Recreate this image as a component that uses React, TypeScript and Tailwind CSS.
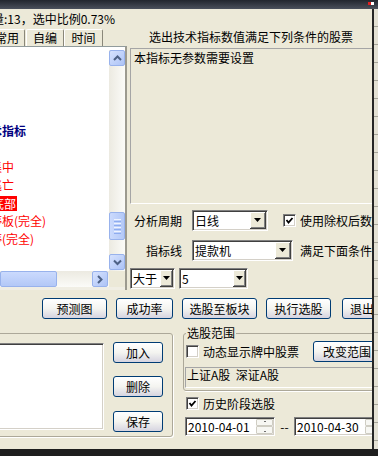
import React from "react";

const sunken =
  "border border-t-[#808080] border-l-[#808080] border-b-white border-r-white shadow-[inset_1px_1px_0_#404040,inset_-1px_-1px_0_#d4d0c8] p-[1px]";

const XpButton = ({ label, className = "" }: { label: string; className?: string }) => (
  <div
    className={`flex h-[21px] shrink-0 items-center justify-center whitespace-nowrap rounded-[3px] border border-[#003c74] bg-linear-to-b from-white via-[#f4f4f0] to-[#d6d4e0] leading-none text-black ${className}`}
  >
    {label}
  </div>
);

const ScrollBtn = ({ dir }: { dir: "up" | "down" | "right" }) => {
  const pts = dir === "up" ? "1,5 4.5,1.5 8,5" : dir === "down" ? "1,1.5 4.5,5 8,1.5" : "2,1 5.5,4.5 2,8";
  const w = dir === "right" ? 8 : 9;
  const h = dir === "right" ? 9 : 7;
  return (
    <div className="flex h-[16px] w-[16px] shrink-0 items-center justify-center rounded-[2px] border border-[#98b2ec] bg-linear-to-br from-[#d6e2fe] to-[#adc3f6]">
      <svg width={w} height={h} viewBox={`0 0 ${w} ${h}`}>
        <polyline points={pts} fill="none" stroke="#4d6185" strokeWidth="2" />
      </svg>
    </div>
  );
};

const Grip = () => (
  <div className="flex flex-col gap-[1px]">
    <div className="h-[1px] w-[7px] bg-[#eef3fe]" />
    <div className="h-[1px] w-[7px] bg-[#8eacef]" />
    <div className="h-[1px] w-[7px] bg-[#eef3fe]" />
    <div className="h-[1px] w-[7px] bg-[#8eacef]" />
    <div className="h-[1px] w-[7px] bg-[#eef3fe]" />
    <div className="h-[1px] w-[7px] bg-[#8eacef]" />
    <div className="h-[1px] w-[7px] bg-[#eef3fe]" />
    <div className="h-[1px] w-[7px] bg-[#8eacef]" />
  </div>
);

const Arrow = () => (
  <svg width="7" height="4" viewBox="0 0 7 4">
    <polygon points="0,0 7,0 3.5,4" fill="#000" />
  </svg>
);

const Combo = ({ text, className = "", btn = "w-[16px]" }: { text: string; className?: string; btn?: string }) => (
  <div className={`flex h-[21px] shrink-0 bg-white ${sunken} ${className}`}>
    <div className="flex flex-1 items-center overflow-hidden whitespace-nowrap pl-[1px] leading-none">{text}</div>
    <div
      className={`flex shrink-0 items-center justify-center border-b border-r border-[#404040] bg-[#ece9d8] shadow-[inset_1px_1px_0_#fff,inset_-1px_-1px_0_#808080] ${btn}`}
    >
      <Arrow />
    </div>
  </div>
);

const Check = ({ checked = false, className = "" }: { checked?: boolean; className?: string }) => (
  <div className={`flex h-[13px] w-[13px] shrink-0 items-center justify-center bg-white ${sunken} ${className}`}>
    {checked && (
      <svg width="9" height="9" viewBox="0 0 9 9">
        <polyline points="1.5,4 3.5,6.5 7.5,2" fill="none" stroke="#000" strokeWidth="1.8" />
      </svg>
    )}
  </div>
);

const Spin = () => (
  <div className="flex w-[17px] shrink-0 flex-col">
    <div className="flex h-[7px] items-start justify-center rounded-[1px] border border-[#cfcdc3] bg-[#f7f7f3] pt-[1px]">
      <div className="h-[1px] w-[2px] bg-[#707070]" />
    </div>
    <div className="flex h-[8px] items-end justify-center rounded-[1px] border border-[#cfcdc3] bg-[#f7f7f3] pb-[1px]">
      <div className="h-[1px] w-[2px] bg-[#707070]" />
    </div>
  </div>
);

const DateBox = ({ text }: { text: string }) => (
  <div className={`flex h-[19px] w-[90px] shrink-0 bg-white ${sunken}`}>
    <div className="flex flex-1 items-center whitespace-nowrap pl-[1px] leading-none">{text}</div>
    <Spin />
  </div>
);

const listRows = [
  { t: "", c: "" },
  { t: "", c: "" },
  { t: "", c: "" },
  { t: "", c: "" },
  { t: "技术指标", c: "ml-[-22px] font-bold text-[#000080]" },
  { t: "", c: "" },
  { t: "筹码集中", c: "ml-[-34px] text-[#ff0000]" },
  { t: "主力逃亡", c: "ml-[-34px] text-[#ff0000]" },
  { t: "绝对底部", c: "ml-[-33px] h-[15px] bg-[#ff0000] px-[1px] leading-[15px] text-white" },
  { t: "涨停板(完全)", c: "ml-[-22px] text-[#ff0000]" },
  { t: "跌停(完全)", c: "ml-[-22px] text-[#ff0000]" },
];

const Tab = ({ label, className }: { label: string; className: string }) => (
  <div
    className={`flex shrink-0 items-center rounded-t-[2px] border-l border-t border-white border-r border-r-[#8a877a] leading-none ${className}`}
  >
    {label}
  </div>
);

export default function App() {
  return (
    <div className="flex h-[456px] w-[378px] flex-col overflow-hidden bg-[#ece9d8] font-['Noto_Sans_CJK_SC',sans-serif] text-[12px] text-black">
      {/* title bar */}
      <div className="flex h-[9px] shrink-0 justify-end bg-linear-to-b from-[#22262e] to-[#4b515c] pr-[4px] pt-[2px]">
        <div className="flex h-[3px]">
          <span className="w-[3px] bg-[#e02020]" />
          <span className="w-[3px] bg-white" />
        </div>
      </div>

      <div className="flex h-[440px] shrink-0">
        <div className="flex w-[372px] shrink-0 flex-col overflow-hidden">
          {/* upper part */}
          <div className="flex h-[281px] shrink-0">
            <div className="flex w-[127px] shrink-0 flex-col">
              <div className="ml-[-20px] mt-[4px] h-[12px] whitespace-nowrap leading-[12px]">数量:13，选中比例0.73%</div>
              <div className="mt-[4px] flex h-[17px] shrink-0">
                <Tab label="常用" className="ml-[-24px] w-[49px] pl-[18px]" />
                <Tab label="自编" className="ml-[1px] w-[38px] justify-center" />
                <Tab label="时间" className="w-[39px] justify-center" />
              </div>
              <div className="grid h-[244px] w-[127px] shrink-0 grid-cols-[109px_16px] grid-rows-[221px_16px_3px] border-r-2 border-t border-r-[#9c9a8f] border-t-[#919b9c] bg-white pt-[3px]">
                <div className="flex flex-col overflow-hidden">
                  {listRows.map((r, i) => (
                    <div key={i} className="flex h-[18px] shrink-0 items-center whitespace-nowrap leading-none">
                      <span className={`shrink-0 ${r.c}`}>{r.t}</span>
                    </div>
                  ))}
                </div>
                <div className="flex flex-col bg-linear-to-r from-[#eceae1] to-[#fbfbf8]">
                  <ScrollBtn dir="up" />
                  <div className="h-[146px] shrink-0" />
                  <div className="flex h-[28px] w-[16px] shrink-0 items-center justify-center rounded-[2px] border border-[#98b2ec] bg-linear-to-r from-[#cbdafd] to-[#b3c8f7]">
                    <Grip />
                  </div>
                  <div className="h-[14px] shrink-0" />
                  <ScrollBtn dir="down" />
                </div>
                <div className="flex bg-linear-to-b from-[#eceae1] to-[#fbfbf8]">
                  <div className="h-[16px] w-[57px] shrink-0 rounded-[2px] border border-[#98b2ec] bg-linear-to-b from-[#cbdafd] to-[#b3c8f7]" />
                  <div className="w-[35px] shrink-0" />
                  <ScrollBtn dir="right" />
                </div>
                <div className="bg-[#ece9d8]" />
                <div className="col-span-2 bg-[#f0eee4]" />
              </div>
            </div>

            <div className="ml-[3px] flex w-[242px] shrink-0 flex-col">
              <div className="mt-[22px] h-[12px] whitespace-nowrap text-center leading-[12px]">选出技术指标数值满足下列条件的股票</div>
              <div className="mt-[5px] h-[156px] w-[246px] shrink-0 border-b border-l border-t border-[#a5a5a5] border-b-white pl-[3px] pt-[3px] leading-[12px]">
                本指标无参数需要设置
              </div>
              <div className="mt-[6px] flex h-[21px] shrink-0 items-center">
                <div className="w-[52px] shrink-0 whitespace-nowrap text-right leading-none">分析周期</div>
                <Combo text="日线" className="ml-[10px] w-[76px]" />
                <Check checked className="ml-[15px]" />
                <div className="ml-[4px] shrink-0 whitespace-nowrap leading-none">使用除权后数据</div>
              </div>
              <div className="mt-[9px] flex h-[21px] shrink-0 items-center">
                <div className="w-[52px] shrink-0 whitespace-nowrap text-right leading-none">指标线</div>
                <Combo text="提款机" className="ml-[10px] w-[101px]" />
                <div className="ml-[7px] shrink-0 whitespace-nowrap leading-none">满足下面条件</div>
              </div>
              <div className="mt-[7px] flex h-[21px] shrink-0 items-center">
                <Combo text="大于" className="w-[45px]" btn="w-[13px]" />
                <Combo text="5" className="ml-[4px] w-[69px]" btn="w-[13px]" />
              </div>
            </div>
          </div>

          {/* buttons */}
          <div className="mt-[8px] flex h-[21px] shrink-0">
            <XpButton label="预测图" className="ml-[42px] w-[65px]" />
            <XpButton label="成功率" className="ml-[9px] w-[57px]" />
            <XpButton label="选股至板块" className="ml-[9px] w-[75px]" />
            <XpButton label="执行选股" className="ml-[9px] w-[65px]" />
            <XpButton label="退出" className="ml-[11px] w-[40px]" />
          </div>

          {/* lower part */}
          <div className="mt-[14px] flex shrink-0 items-start">
            <div className="ml-[-3px] flex h-[104px] w-[176px] shrink-0 rounded-[3px] border border-[#aca899] shadow-[1px_1px_0_#fff]">
              <div className={`mt-[9px] h-[87px] w-[106px] shrink-0 bg-white ${sunken}`} />
              <div className="ml-[9px] flex flex-col">
                <XpButton label="加入" className="mt-[8px] w-[50px]" />
                <XpButton label="删除" className="mt-[13px] w-[50px]" />
                <XpButton label="保存" className="mt-[14px] w-[50px]" />
              </div>
            </div>

            <div className="ml-[10px] mt-[-6px] flex w-[200px] shrink-0 flex-col">
              <fieldset className="w-[200px] rounded-[3px] border border-[#aca899] pb-[2px] pl-[2px] shadow-[1px_1px_0_#fff]">
                <legend className="px-[1px] leading-[12px]">选股范围</legend>
                <div className="mt-[2px] flex h-[21px] items-center">
                  <Check />
                  <div className="ml-[4px] w-[96px] shrink-0 whitespace-nowrap leading-none">动态显示牌中股票</div>
                  <XpButton label="改变范围" className="ml-[14px] w-[68px]" />
                </div>
                <div className="ml-[-1px] mt-[5px] h-[21px] w-[200px] whitespace-nowrap border-b border-l border-t border-[#a5a5a5] border-b-white pl-[1px] pt-[1px] leading-[12px]">
                  上证A股&nbsp;&nbsp;深证A股
                </div>
              </fieldset>
              <div className="mt-[6px] flex h-[13px] items-center pl-[3px]">
                <Check checked />
                <div className="ml-[4px] shrink-0 whitespace-nowrap leading-none">历史阶段选股</div>
              </div>
              <div className="mt-[7px] flex h-[19px] items-center">
                <div className="ml-[2px]">
                  <DateBox text="2010-04-01" />
                </div>
                <div className="w-[19px] shrink-0 text-center leading-none">--</div>
                <DateBox text="2010-04-30" />
              </div>
            </div>
          </div>
        </div>
        <div className="w-[2px] shrink-0 bg-[#262626]" />
        <div className="w-[4px] shrink-0 bg-[repeating-linear-gradient(180deg,#e4e1d4_0px,#e4e1d4_17px,#a6a49a_17px,#a6a49a_18px)]" />
      </div>
      <div className="flex-1 bg-[#1e1e1e]" />
    </div>
  );
}
